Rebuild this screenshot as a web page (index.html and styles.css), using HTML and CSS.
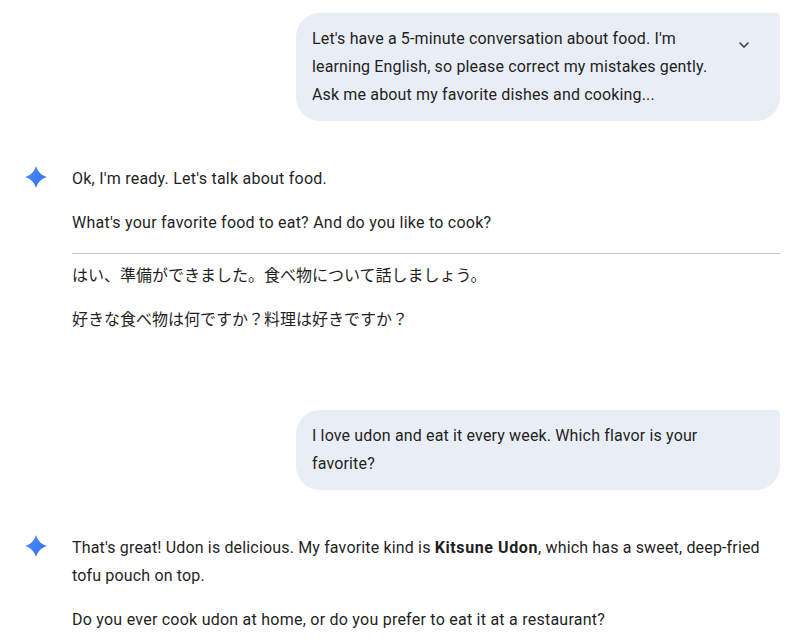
FILE: index.html
```html
<!DOCTYPE html>
<html lang="en">
<head>
<meta charset="utf-8">
<title>Conversation</title>
<link rel="stylesheet" href="styles.css">
</head>
<body>
<main class="chat">
  <div class="user-row">
    <div class="bubble">
      <p>Let's have a 5-minute conversation about food. I'm learning English, so please correct my mistakes gently. Ask me about my favorite dishes and cooking...</p>
      <svg class="chevron" viewBox="0 0 12 8" width="12" height="8" aria-hidden="true"><path d="M1.500 1.500 6 6l4.500-4.500" fill="none" stroke="#444746" stroke-width="1.600"/></svg>
    </div>
  </div>
  <div class="reply first-reply">
    <svg class="spark" viewBox="0 0 24 24" width="22" height="22" aria-hidden="true"><defs><linearGradient id="g1" x1="0" y1="0" x2="1" y2="1"><stop offset="0" stop-color="#4b90fa"/><stop offset="1" stop-color="#2f6fed"/></linearGradient></defs><path d="M12 0c1.600 5.500 5.500 10.400 12 12-6.500 1.600-10.400 6.500-12 12-1.600-5.500-5.500-10.400-12-12 6.500-1.600 10.400-6.500 12-12z" fill="url(#g1)"/></svg>
    <div class="body">
      <p>Ok, I'm ready. Let's talk about food.</p>
      <p>What's your favorite food to eat? And do you like to cook?</p>
      <hr class="rule">
      <p class="ja" lang="ja">はい、準備ができました。食べ物について話しましょう。</p>
      <p class="ja" lang="ja">好きな食べ物は何ですか？料理は好きですか？</p>
    </div>
  </div>
  <div class="user-row second">
    <div class="bubble">
      <p>I love udon and eat it every week. Which flavor is your favorite?</p>
    </div>
  </div>
  <div class="reply second-reply">
    <svg class="spark" viewBox="0 0 24 24" width="22" height="22" aria-hidden="true"><path d="M12 0c1.600 5.500 5.500 10.400 12 12-6.500 1.600-10.400 6.500-12 12-1.600-5.500-5.500-10.400-12-12 6.500-1.600 10.400-6.500 12-12z" fill="url(#g1)"/></svg>
    <div class="body">
      <p class="lead">That's great! Udon is delicious. My favorite kind is <b>Kitsune Udon</b>, which has a sweet, deep-fried tofu pouch on top.</p>
      <p>Do you ever cook udon at home, or do you prefer to eat it at a restaurant?</p>
    </div>
  </div>
</main>
</body>
</html>
```
FILE: styles.css
```css
html, body {
  margin: 0;
  padding: 0;
  background: #fff;
  height: 640px;
  overflow: hidden;
}
body {
  font-family: Roboto, "Noto Sans CJK JP", sans-serif;
  font-size: 16px;
  line-height: 28px;
  color: #1f1f1f;
}
p { margin: 0; }
.chat {
  padding: 13px 22px 0 25px;
  display: flex;
  flex-direction: column;
}
.user-row {
  display: flex;
  justify-content: flex-end;
}
.bubble {
  width: 484px;
  box-sizing: border-box;
  padding: 12px 16px;
  background: #e9eef6;
  border-radius: 24px 4px 24px 24px;
  position: relative;
  letter-spacing: 0.15px;
}
.bubble p { width: 410px; }
.chevron {
  position: absolute;
  top: 28px;
  right: 30px;
}
.reply {
  display: flex;
  gap: 25px;
  letter-spacing: 0.24px;
}
.first-reply { margin-top: 43px; }
.second-reply { margin-top: 43px; }
.second { margin-top: 76px; }
.spark { flex: none; margin-top: 2px; }
.body {
  flex: 1;
  display: flex;
  flex-direction: column;
  gap: 16px;
  padding-top: 1px;
}
.rule {
  width: 100%;
  margin: 0 0 -8px;
  border: 0;
  border-top: 1px solid #c7c7c7;
}
.ja { letter-spacing: 0; }
.lead { letter-spacing: 0.16px; }
.lead b { letter-spacing: 0.6px; }
```
